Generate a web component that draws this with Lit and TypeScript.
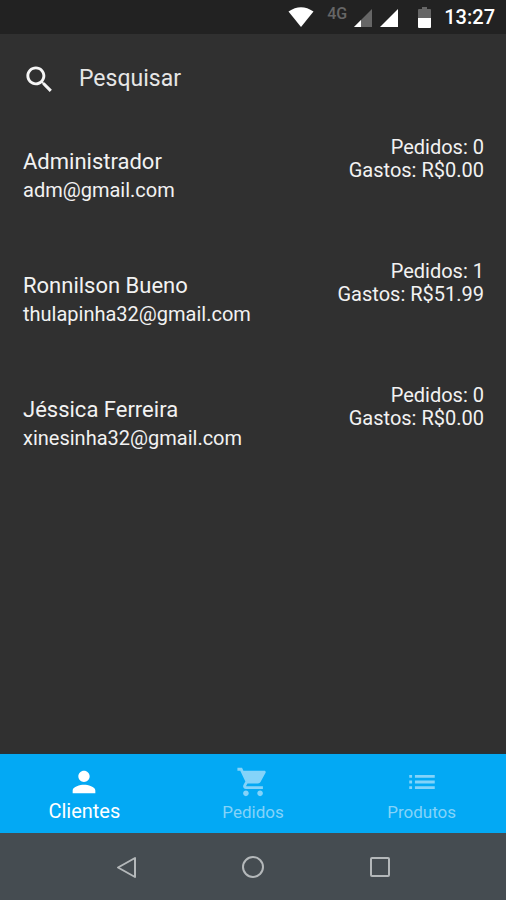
import { LitElement, html, css, svg } from "lit";
import { customElement, state } from "lit/decorators.js";
import { classMap } from "lit/directives/class-map.js";

interface Client {
  name: string;
  email: string;
  orders: number;
  spent: string;
}

const clients: Client[] = [
  { name: "Administrador", email: "adm@gmail.com", orders: 0, spent: "0.00" },
  { name: "Ronnilson Bueno", email: "thulapinha32@gmail.com", orders: 1, spent: "51.99" },
  { name: "Jéssica Ferreira", email: "xinesinha32@gmail.com", orders: 0, spent: "0.00" },
];

const tabs = [
  {
    label: "Clientes",
    icon: svg`<path d="M12 12c2.210 0 4-1.790 4-4s-1.790-4-4-4-4 1.790-4 4 1.790 4 4 4zm0 2c-2.670 0-8 1.340-8 4v2h16v-2c0-2.660-5.330-4-8-4z"/>`,
  },
  {
    label: "Pedidos",
    icon: svg`<path d="M7 18c-1.100 0-1.990.9-1.990 2S5.900 22 7 22s2-.9 2-2-.9-2-2-2zM1 2v2h2l3.600 7.590-1.350 2.450c-.16.280-.25.610-.25.960 0 1.100.9 2 2 2h12v-2H7.420c-.14 0-.25-.11-.25-.25l.03-.12.900-1.630h7.450c.75 0 1.410-.41 1.750-1.030l3.580-6.490c.08-.14.120-.31.120-.48 0-.55-.45-1-1-1H5.210l-.94-2H1zm16 16c-1.100 0-1.990.9-1.990 2s.89 2 1.990 2 2-.9 2-2-.9-2-2-2z"/>`,
  },
  {
    label: "Produtos",
    icon: svg`<path d="M3 13h2v-2H3v2zm0 4h2v-2H3v2zm0-8h2V7H3v2zm4 4h14v-2H7v2zm0 4h14v-2H7v2zM7 7v2h14V7H7z"/>`,
  },
];

@customElement("status-bar")
class StatusBar extends LitElement {
  static styles = css`
    :host {
      display: flex;
      align-items: center;
      justify-content: flex-end;
      height: 34px;
      padding-right: 11px;
      background: #222222;
      color: #ffffff;
    }
    .wifi { margin-right: 13px; }
    .network {
      align-self: flex-start;
      margin-right: 7px;
      font-size: 16px;
      line-height: 28px;
      font-weight: 500;
      color: #666666;
    }
    .signal { margin-right: 8px; }
    .second { margin-right: 20px; }
    .battery { margin-right: 13px; }
    .clock {
      font-size: 20px;
      line-height: 36px;
      font-weight: 500;
    }
    svg { display: block; }
  `;

  render() {
    return html`
      <svg class="wifi" width="26" height="20" viewBox="0 0 26 20" aria-hidden="true">
        <path d="M.5 4.500Q13-4 25.500 4.500L13 20z" fill="#fff" />
      </svg>
      <span class="network">4G</span>
      <svg class="signal" width="18" height="20" viewBox="0 0 18 20" aria-hidden="true">
        <path d="M18 2v18H0z" fill="#666" />
        <path d="M7 13v7H0z" fill="#fff" />
      </svg>
      <svg class="second" width="18" height="20" viewBox="0 0 18 20" aria-hidden="true">
        <path d="M18 2v18H0z" fill="#fff" />
      </svg>
      <svg class="battery" width="13" height="24" viewBox="0 0 13 24" aria-hidden="true">
        <path d="M4 2h5v2h3q1 0 1 1v8H0V5q0-1 1-1h3z" fill="#666" />
        <path d="M0 13h13v9q0 1-1 1H1q-1 0-1-1z" fill="#fff" />
      </svg>
      <time class="clock">13:27</time>
    `;
  }
}

@customElement("client-row")
class ClientRow extends LitElement {
  static properties = { client: { attribute: false } };
  declare client: Client;

  static styles = css`
    :host {
      display: flex;
      justify-content: space-between;
      height: 124px;
      padding: 0 22px 0 23px;
      box-sizing: border-box;
      color: #f2f2f2;
    }
    .person { padding-top: 23px; }
    .name {
      margin: 0;
      font-size: 22px;
      line-height: 30px;
      font-weight: 400;
    }
    .email {
      margin: 0;
      font-size: 20px;
      line-height: 26px;
    }
    .totals {
      padding-top: 12px;
      text-align: right;
      font-size: 20px;
      line-height: 23px;
    }
  `;

  render() {
    const { name, email, orders, spent } = this.client;
    return html`
      <div class="person">
        <h2 class="name">${name}</h2>
        <p class="email">${email}</p>
      </div>
      <div class="totals">
        <div>Pedidos: ${orders}</div>
        <div>Gastos: R$${spent}</div>
      </div>
    `;
  }
}

@customElement("app-root")
class AppRoot extends LitElement {
  @state() private active = "Clientes";
  @state() private query = "";

  static styles = css`
    :host {
      display: flex;
      flex-direction: column;
      min-height: 100vh;
      background: #303030;
      font-family: Roboto, sans-serif;
    }
    main { flex: 1; }
    svg { display: block; }
    button {
      margin: 0;
      padding: 0;
      border: 0;
      background: none;
      font-family: inherit;
    }
    .search {
      display: flex;
      align-items: center;
      gap: 22px;
      height: 90px;
      padding: 0 22px;
    }
    .search input {
      flex: 1;
      min-width: 0;
      padding: 0;
      border: 0;
      outline: 0;
      background: none;
      color: #f2f2f2;
      font-family: inherit;
      font-size: 23px;
      line-height: 30px;
    }
    .search input::placeholder {
      color: #e6e6e6;
      opacity: 1;
    }
    .list {
      margin: 0;
      padding: 0;
      list-style: none;
    }
    .tabs {
      display: flex;
      height: 79px;
      background: #03a9f4;
      box-shadow: 0 0 3px #1b3a48;
    }
    .tab {
      flex: 1;
      display: flex;
      flex-direction: column;
      align-items: center;
      padding-top: 11px;
      color: #84d3f9;
      fill: currentColor;
      font-size: 17px;
      line-height: 27px;
    }
    .tab.active {
      color: #ffffff;
      font-size: 20px;
      line-height: 24px;
    }
    .system {
      display: flex;
      align-items: center;
      justify-content: center;
      gap: 91px;
      height: 67px;
      background: #454c51;
      fill: none;
      stroke: #b4b8ba;
    }
  `;

  private onSearch(event: InputEvent) {
    this.query = (event.target as HTMLInputElement).value;
  }

  render() {
    const term = this.query.toLowerCase();
    const visible = clients.filter((c) => c.name.toLowerCase().includes(term));
    return html`
      <status-bar></status-bar>
      <main>
        <label class="search">
          <svg width="35" height="35" viewBox="0 0 24 24" fill="#f5f5f5" aria-hidden="true">
            <path d="M15.500 14h-.79l-.28-.27C15.410 12.590 16 11.110 16 9.500 16 5.910 13.090 3 9.500 3S3 5.910 3 9.500 5.910 16 9.500 16c1.610 0 3.090-.59 4.230-1.570l.27.280v.79l5 4.990L20.490 19l-4.990-5zm-6 0C7.010 14 5 11.990 5 9.500S7.010 5 9.500 5 14 7.010 14 9.500 11.990 14 9.500 14z" />
          </svg>
          <input type="text" placeholder="Pesquisar" aria-label="Pesquisar" .value=${this.query} @input=${this.onSearch} />
        </label>
        <ul class="list">
          ${visible.map((c) => html`<li><client-row .client=${c}></client-row></li>`)}
        </ul>
      </main>
      <nav class="tabs">
        ${tabs.map(
          (t) => html`
            <button
              class=${classMap({ tab: true, active: t.label === this.active })}
              @click=${() => (this.active = t.label)}
            >
              <svg width="34" height="34" viewBox="0 0 24 24" aria-hidden="true">${t.icon}</svg>
              ${t.label}
            </button>
          `
        )}
      </nav>
      <footer class="system">
        <button aria-label="Voltar">
          <svg width="36" height="36" viewBox="0 0 36 36" stroke-width="2" stroke-linejoin="round">
            <path d="M27 9v19L10 18.500z" />
          </svg>
        </button>
        <button aria-label="Início">
          <svg width="36" height="36" viewBox="0 0 36 36" stroke-width="2">
            <circle cx="18" cy="18" r="10" />
          </svg>
        </button>
        <button aria-label="Recentes">
          <svg width="36" height="36" viewBox="0 0 36 36" stroke-width="2" stroke-linejoin="round">
            <rect x="9" y="9" width="18" height="18" rx="1" />
          </svg>
        </button>
      </footer>
    `;
  }
}
